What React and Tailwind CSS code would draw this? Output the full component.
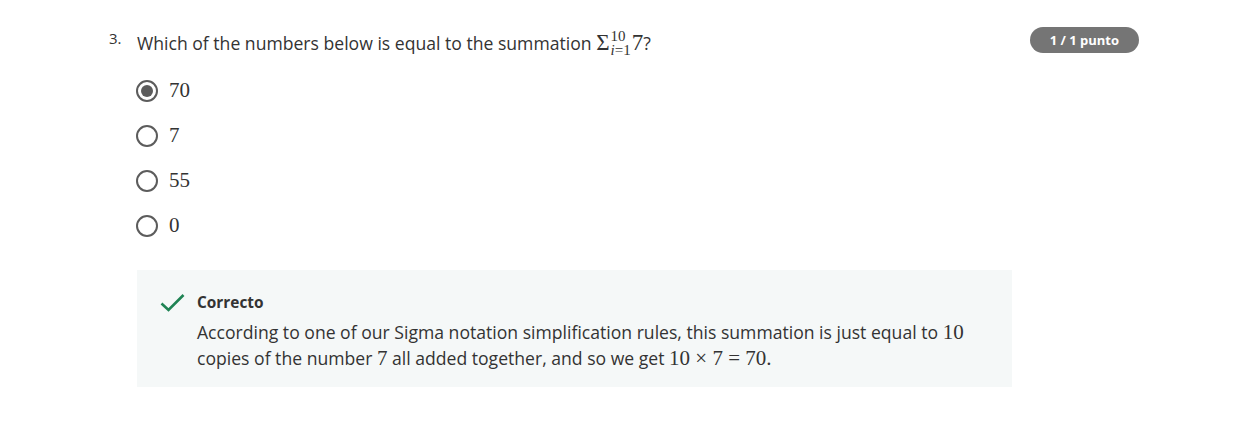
const OPTIONS = [
  { value: '70', checked: true },
  { value: '7' },
  { value: '55' },
  { value: '0' },
]

function M({ children, className = '' }) {
  return <span className={`font-['Liberation_Serif',serif] ${className}`}>{children}</span>
}

function Radio({ checked }) {
  return (
    <span className="flex h-[22px] w-[22px] shrink-0 items-center justify-center rounded-full border-2 border-[#5c5c5c]">
      {checked && <span className="h-[12px] w-[12px] rounded-full bg-[#5c5c5c]" />}
    </span>
  )
}

export default function App() {
  return (
    <div className="min-h-[430px] bg-white pl-[109px] pr-[119px] pt-[27px] font-['Open_Sans',sans-serif] text-[#1f1f1f]">
      <div className="flex items-start">
        <span className="w-[28px] pt-[2px] text-[15px] leading-[18px] text-[#333]">3.</span>
        <div className="flex-1 pt-[4px] text-[17.6px] leading-[24px] text-[#333]">
          Which of the numbers below is equal to the summation{' '}
          <M className="text-[23px] leading-[24px]">
            Σ
            <span className="relative top-[-9px] ml-[1px] mr-[1px] inline-flex flex-col text-[15px] leading-[14px]">
              <span>10</span>
              <span className="italic">
                i<span className="not-italic">=1</span>
              </span>
            </span>
            7
          </M>
          ?
        </div>
        <span className="rounded-full bg-[#757575] px-[20px] py-[4px] text-[13px] font-bold leading-[18px] text-white">
          1 / 1 punto
        </span>
      </div>

      <div className="mt-[14px] flex flex-col gap-[23px] pl-[27px]">
        {OPTIONS.map((o) => (
          <label key={o.value} className="flex h-[22px] items-center gap-[11px]">
            <Radio checked={o.checked} />
            <M className="text-[21px] text-[#333]">{o.value}</M>
          </label>
        ))}
      </div>

      <div className="ml-[28px] mt-[33px] w-[875px] bg-[#f5f8f8] px-[23px] pb-[16px] pt-[22px]">
        <div className="flex items-start gap-[12px]">
          <svg width="25" height="20" viewBox="0 0 25 20" className="mt-[1px] shrink-0">
            <path d="M1.5 10.5 L8.5 17 L23.5 2" fill="none" stroke="#1f8354" strokeWidth="2.6" />
          </svg>
          <div>
            <div className="text-[15.4px] font-bold leading-[22px] text-[#333]">Correcto</div>
            <p className="mt-[5px] text-[17.6px] leading-[26px] text-[#333]">
              According to one of our Sigma notation simplification rules, this summation is just equal to{' '}
              <M className="text-[21px]">10</M> copies of the number <M className="text-[21px]">7</M> all added together,
              and so we get <M className="text-[21px]">10 × 7 = 70.</M>
            </p>
          </div>
        </div>
      </div>
    </div>
  )
}
